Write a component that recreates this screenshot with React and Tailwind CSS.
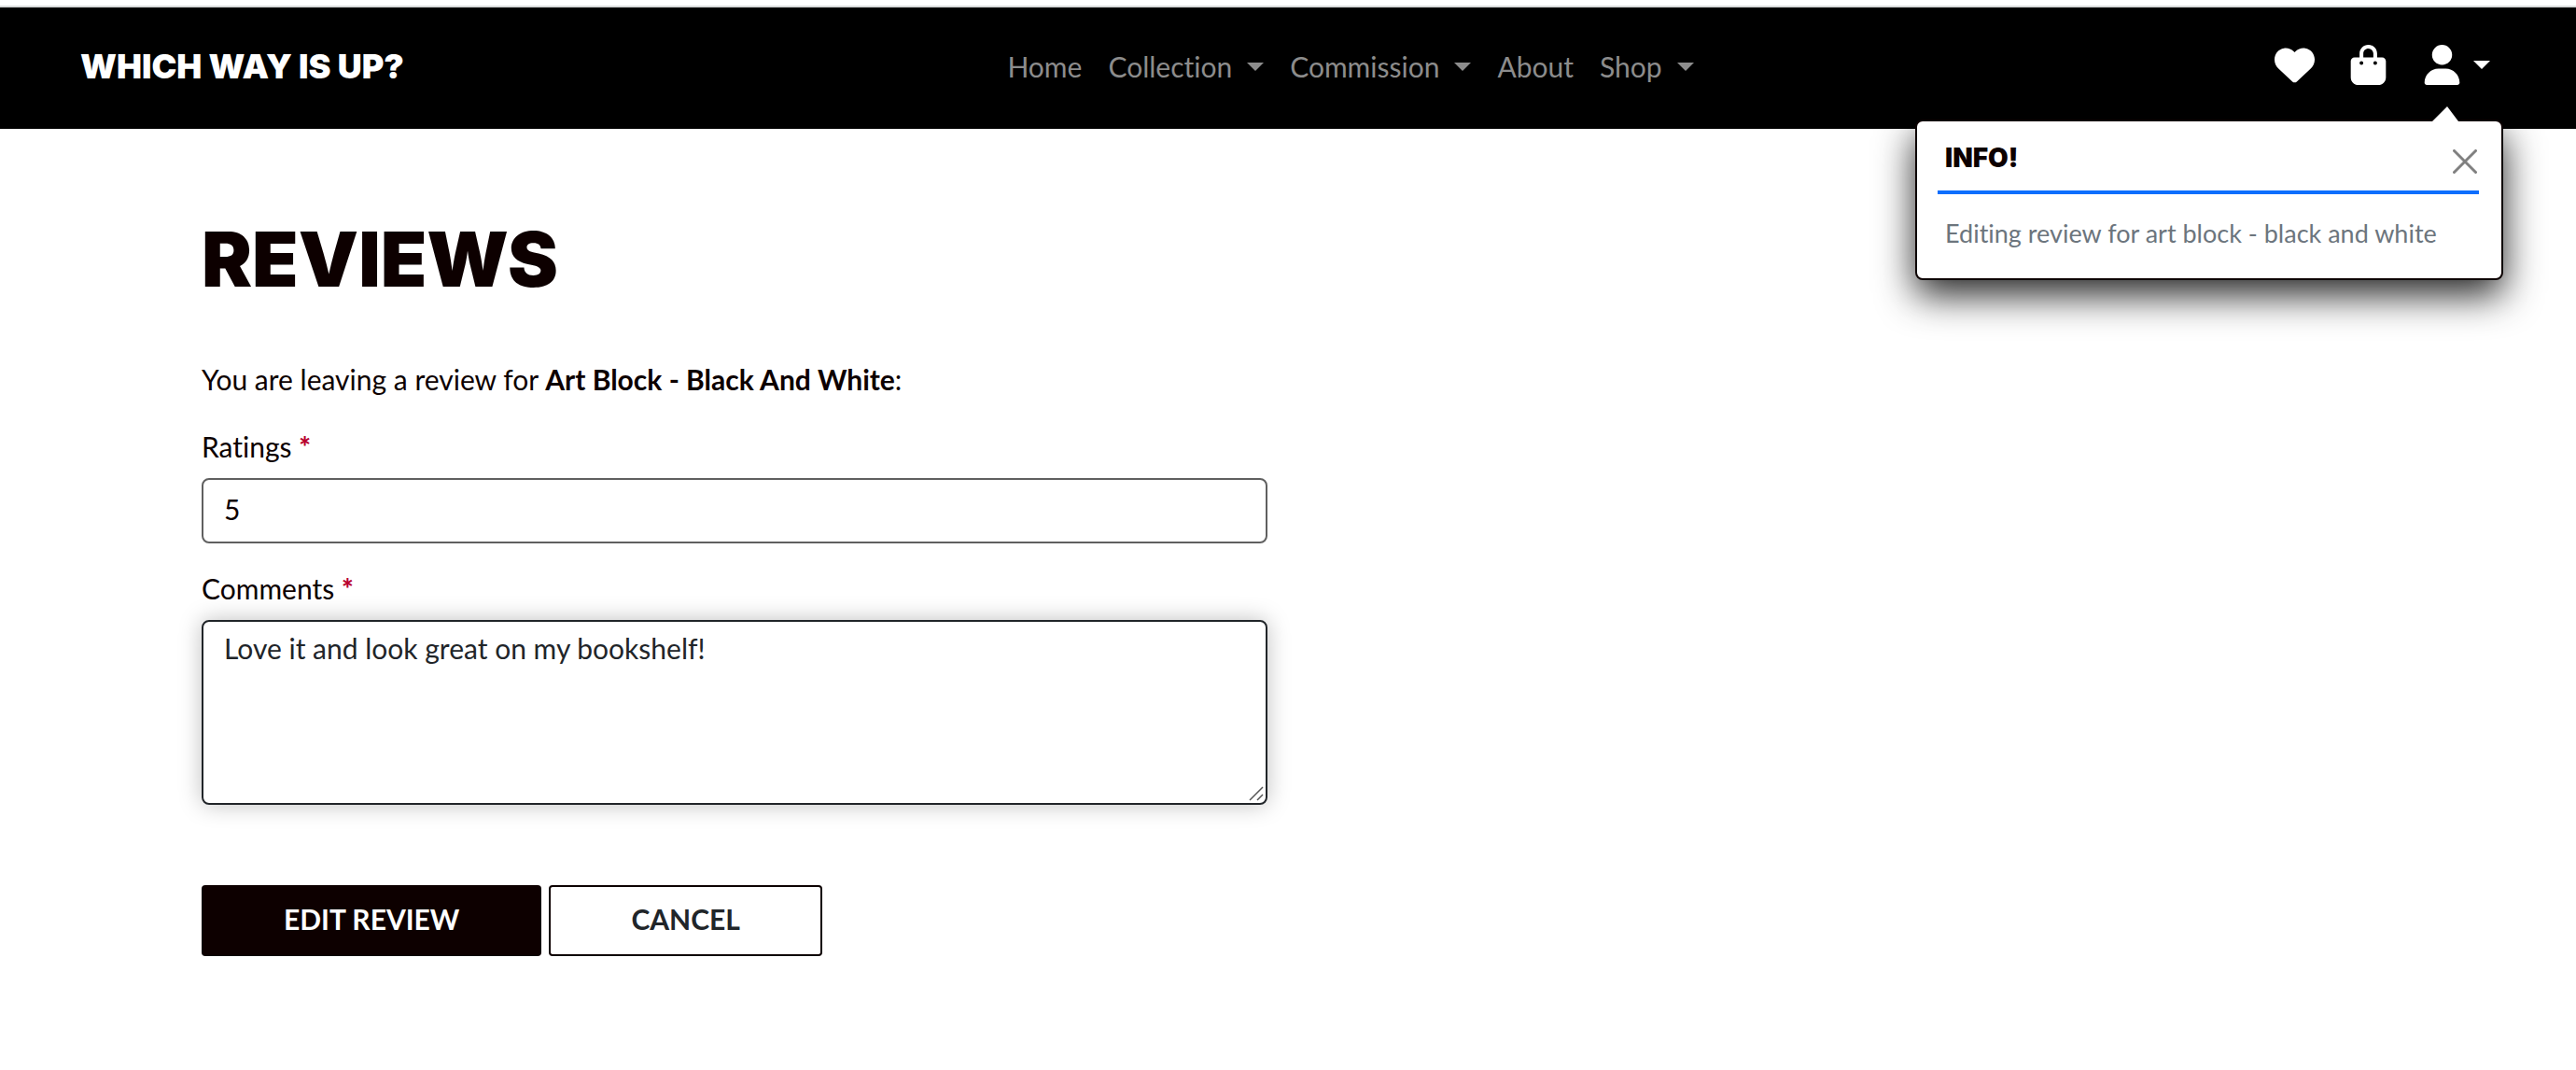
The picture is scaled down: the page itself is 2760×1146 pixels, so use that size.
import { FaHeart, FaBagShopping, FaUser } from "react-icons/fa6";

function Caret() {
  return (
    <span
      aria-hidden="true"
      className="inline-block border-x-[9px] border-t-[9px] border-x-transparent border-t-current"
    />
  );
}

const links = [
  { label: "Home" },
  { label: "Collection", menu: true },
  { label: "Commission", menu: true },
  { label: "About" },
  { label: "Shop", menu: true },
];

function Navbar() {
  return (
    <header className="relative border-t-2 border-[#d8dada] bg-black">
      <div className="flex h-[130px] items-center justify-between pr-[92px] pb-1 pl-[86px]">
        <a href="#" className="mr-6 font-['Inter'] text-[36px] leading-[40px] font-black whitespace-nowrap text-white">
          WHICH WAY IS UP?
        </a>
        <nav className="flex items-center gap-7 text-[#8c8c8c]">
          {links.map((l) =>
            l.menu ? (
              <button key={l.label} type="button" className="flex items-center gap-4">
                {l.label}
                <Caret />
              </button>
            ) : (
              <a key={l.label} href="#">
                {l.label}
              </a>
            )
          )}
        </nav>
        <div className="flex items-center gap-9 pb-1 text-white">
          <a href="#" aria-label="Wishlist">
            <FaHeart className="size-[43px]" />
          </a>
          <a href="#" aria-label="Bag">
            <FaBagShopping className="size-[43px]" />
          </a>
          <button type="button" aria-label="Account" className="flex items-center gap-3">
            <FaUser className="size-[43px]" />
            <Caret />
          </button>
        </div>
      </div>
      <Toast />
    </header>
  );
}

function Toast() {
  return (
    <div
      role="status"
      className="absolute top-[120px] right-[78px] w-[630px] rounded-lg border-2 border-[#0d0000] bg-white pr-6 pb-7 pl-[22px] shadow-[0_16px_40px_rgba(0,0,0,0.85)]"
    >
      <svg viewBox="0 0 28 16" className="absolute -top-4 right-[46px] h-4 w-7 fill-white" aria-hidden="true">
        <path d="M0 16 16 0 28 16Z" />
      </svg>
      <div className="flex items-center justify-between border-b-4 border-[#0d6efd] pt-1 pl-2">
        <h2 className="font-['Inter'] text-[28px] leading-[70px] font-black">INFO!</h2>
        <button type="button" aria-label="Close" className="pt-2 pr-0.5">
          <svg viewBox="0 0 26 26" className="block size-[26px] stroke-[#808080]" strokeWidth="3" strokeLinecap="round" aria-hidden="true">
            <path d="M1.5 1.5 24.5 24.5M24.5 1.5 1.5 24.5" />
          </svg>
        </button>
      </div>
      <p className="pt-[22px] pl-2 text-[27px] leading-[40px] text-[#6c757d]">Editing review for art block - black and white</p>
    </div>
  );
}

function Required() {
  return <span className="font-black text-[#b8002e]">*</span>;
}

export default function App() {
  return (
    <div className="min-h-screen bg-white pt-1.5 font-['Lato',sans-serif] text-[30px] leading-[48px] text-[#0d0000] [font-variant-ligatures:none]">
      <Navbar />
      <main className="w-1/2 min-w-[700px] pr-[22px] pl-[216px]">
        <h1 className="pt-[92px] font-['Inter'] text-[81px] leading-[96px] font-black">REVIEWS</h1>
        <form className="pt-14">
          <p>
            You are leaving a review for <strong>Art Block - Black And White</strong>:
          </p>
          <label htmlFor="rating" className="mt-6 block">
            Ratings <Required />
          </label>
          <input id="rating" defaultValue="5" className="mt-[10px] block h-[70px] w-full rounded-lg border-2 border-[#606060] px-[22px] pb-1" />
          <label htmlFor="comments" className="mt-6 block">
            Comments <Required />
          </label>
          <div className="relative mt-[10px]">
            <textarea
              id="comments"
              defaultValue="Love it and look great on my bookshelf!"
              className="block h-[198px] w-full resize-none rounded-lg border-2 border-[#212529] px-[22px] py-1 text-[#212529] shadow-[0_0_24px_rgba(0,0,0,0.25)]"
            />
            <svg viewBox="0 0 16 16" className="absolute right-1 bottom-1 size-4 fill-none stroke-[#555555]" strokeWidth="1.5" aria-hidden="true">
              <path d="M1 15 15 1M9 15 15 9" />
            </svg>
          </div>
          <div className="flex gap-2 pt-[86px] font-bold">
            <button type="submit" className="rounded bg-[#0d0000] px-[88px] pt-3 pb-4 text-white">
              EDIT REVIEW
            </button>
            <button type="button" className="rounded border-2 border-[#0d0000] px-[86px] pb-1 text-[#212529]">
              CANCEL
            </button>
          </div>
        </form>
      </main>
    </div>
  );
}
